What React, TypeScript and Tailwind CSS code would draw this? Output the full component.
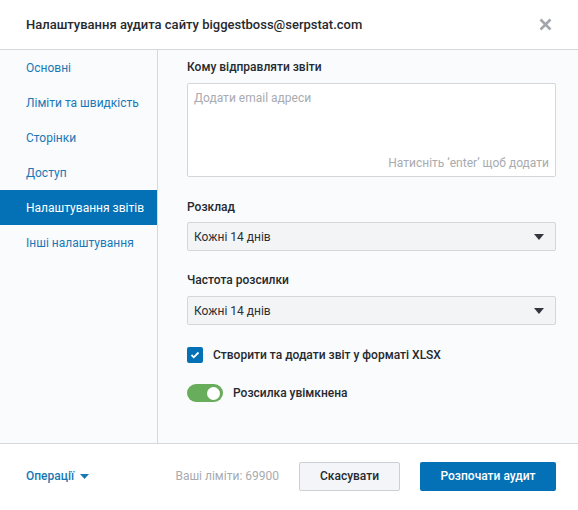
import React from 'react'

const navItems = [
  'Основні',
  'Ліміти та швидкість',
  'Сторінки',
  'Доступ',
  'Налаштування звітів',
  'Інші налаштування',
]

const Caret = () => (
  <svg width="10" height="6" viewBox="0 0 10 6" className="fill-[#33373d]">
    <path d="M0 0h10L5 6z" />
  </svg>
)

const Select = ({ value }: { value: string }) => (
  <div className="flex h-[29px] items-center justify-between rounded-[2px] border border-[#d3d6db] bg-[#f3f4f6] pl-[6px] pr-[11px] text-[12px] text-[#2b2e33]">
    <span>{value}</span>
    <Caret />
  </div>
)

export default function App() {
  return (
    <div className="flex h-[510px] w-[578px] flex-col bg-white font-['Roboto',sans-serif]">
      <div className="flex h-[50px] shrink-0 items-center justify-between border-b border-[#d5d8dc] pl-[26px] pr-[26px]">
        <h1 className="text-[13px] font-medium text-[#26292e]">
          Налаштування аудита сайту biggestboss@serpstat.com
        </h1>
        <svg width="13" height="13" viewBox="0 0 13 13" className="stroke-[#a3a6ab]">
          <path d="M1.5 1.5l10 10M11.5 1.5l-10 10" strokeWidth="2.6" />
        </svg>
      </div>

      <div className="flex h-[394px] shrink-0 border-b border-[#d5d8dc] bg-[#f9fbfd]">
        <div className="w-[158px] shrink-0 border-r border-[#d5d8dc]">
          {navItems.map((item, i) => (
            <div
              key={item}
              className={
                i === 4
                  ? 'flex h-[35px] items-center bg-[#0471b6] pl-[26px] text-[12px] text-white'
                  : 'flex h-[35px] items-center pl-[26px] text-[12px] text-[#1a78b5]'
              }
            >
              {item}
            </div>
          ))}
        </div>

        <div className="flex flex-1 flex-col pl-[29px] pr-[22px] pt-[9px]">
          <p className="text-[12px] font-medium leading-[16px] text-[#26292e]">Кому відправляти звіти</p>
          <div className="mt-[8px] flex h-[94px] flex-col justify-between rounded-[2px] border border-[#d3d6db] bg-white px-[6px] pb-[5px] pt-[6px] text-[12px] leading-[16px] text-[#a8abb0]">
            <span>Додати email адреси</span>
            <span className="self-end">Натисніть ‘enter’ щоб додати</span>
          </div>

          <p className="mt-[22px] text-[12px] font-medium leading-[16px] text-[#26292e]">Розклад</p>
          <div className="mt-[7px]">
            <Select value="Кожні 14 днів" />
          </div>

          <p className="mt-[21px] text-[12px] font-medium leading-[16px] text-[#26292e]">Частота розсилки</p>
          <div className="mt-[8px]">
            <Select value="Кожні 14 днів" />
          </div>

          <label className="mt-[22px] flex h-[16px] items-center gap-[10px] text-[12px] font-medium leading-[16px] text-[#26292e]">
            <span className="flex h-[16px] w-[16px] items-center justify-center rounded-[2px] bg-[#0471b6]">
              <svg width="10" height="8" viewBox="0 0 10 8" className="fill-none stroke-white">
                <path d="M1.5 4l2.3 2.3L8.5 1.5" strokeWidth="1.8" />
              </svg>
            </span>
            Створити та додати звіт у форматі XLSX
          </label>

          <label className="mt-[21px] flex h-[18px] items-center gap-[10px] text-[12px] font-medium leading-[16px] text-[#26292e]">
            <span className="flex h-[18px] w-[36px] items-center justify-end rounded-full bg-[#68ad5b] pr-[3px]">
              <span className="h-[13px] w-[13px] rounded-full bg-white" />
            </span>
            Розсилка увімкнена
          </label>
        </div>
      </div>

      <div className="flex flex-1 items-center pb-[2px] pl-[26px] pr-[22px]">
        <button className="flex items-center gap-[6px] text-[12px] font-medium text-[#1a78b5]">
          Операції
          <svg width="9" height="5" viewBox="0 0 9 5" className="fill-[#1a78b5]">
            <path d="M0 0h9L4.5 5z" />
          </svg>
        </button>
        <span className="ml-auto text-[12px] text-[#a8abb0]">Ваші ліміти: 69900</span>
        <button className="ml-[20px] h-[29px] w-[101px] rounded-[2px] border border-[#ccd0d5] bg-[#f3f5f8] text-[12px] font-medium text-[#26292e]">
          Скасувати
        </button>
        <button className="ml-[20px] h-[29px] w-[136px] rounded-[2px] bg-[#0471b6] text-[12px] font-medium text-white">
          Розпочати аудит
        </button>
      </div>
    </div>
  )
}
